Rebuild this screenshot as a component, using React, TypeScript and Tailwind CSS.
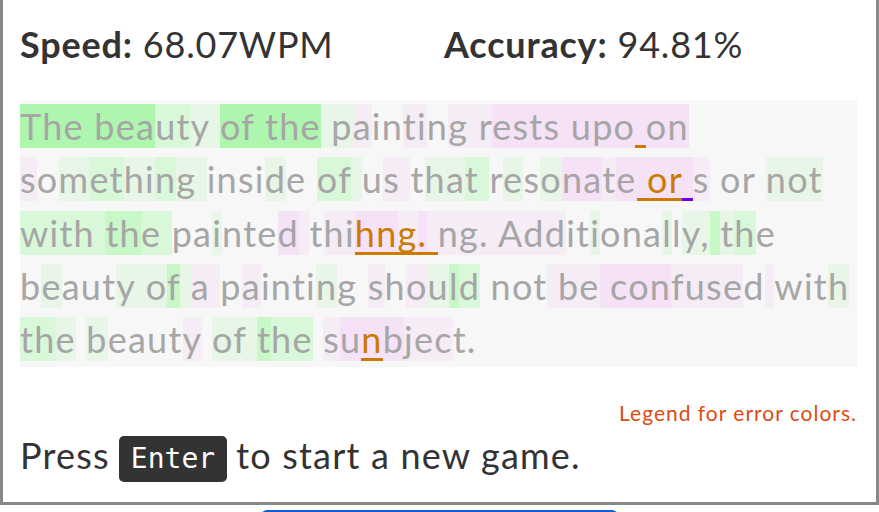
import React from "react";

// heat levels for each typed character
const heat: Record<string, string> = {
  G: "bg-[#aef5ae]",
  M: "bg-[#c8f7c8]",
  g: "bg-[#d9f8d9]",
  l: "bg-[#e7f6e7]",
  P: "bg-[#f6e2f6]",
  p: "bg-[#f5ecf5]",
  ".": "",
};

type Seg = { t: string; c: string; err?: "o" | "p" };

const lines: Seg[][] = [
  [
    { t: "The beauty of the painting rests upo", c: "GGGGGGGggllGGGGGGllp..pp.pppPPPPPPPPP" },
    { t: " ", c: "P", err: "o" },
    { t: "on", c: "PP" },
  ],
  [
    { t: "something inside of us that resonate", c: "p.lggllgll....l..ggl pp.llgg.l.lPPpPP" },
    { t: " or", c: "PPP", err: "o" },
    { t: " ", c: "P", err: "p" },
    { t: "s or not", c: "p....lll" },
  ],
  [
    { t: "with the painted thi", c: "gggggMMgg..l...Pp.pp" },
    { t: "hng. ", c: "PPpPp", err: "o" },
    { t: "ng. Additionally, the", c: "ppppppp..l...l.llMlg" },
  ],
  [
    { t: "beauty of a painting should not be confused with", c: ".l...lllMlpp.p....l..p.plMg....pppPPPPpppp.p...l." },
  ],
  [
    { t: "the beauty of the su", c: "ggl.l....p.lllMgg.pP" },
    { t: "n", c: "P", err: "o" },
    { t: "bject.", c: "Pppp.." },
  ],
];

function Line({ segs }: { segs: Seg[] }) {
  return (
    <div className="whitespace-pre leading-[53.33px]">
      {segs.map((s, i) =>
        s.t.split("").map((ch, j) => {
          const cls = heat[s.c[j] ?? "."] ?? "";
          const e =
            s.err === "o"
              ? "text-[#cc7a00] shadow-[inset_0_-3px_0_#cc7a00]"
              : s.err === "p"
              ? "shadow-[inset_0_-3px_0_#6a00f0]"
              : "";
          return (
            <span key={i + "-" + j} className={`${cls} ${e}`}>
              {ch}
            </span>
          );
        })
      )}
    </div>
  );
}

export default function App() {
  return (
    <div className="h-[512px] w-[879px] overflow-hidden bg-white font-['Lato',sans-serif]">
      <div className="border-x-[3px] border-b-[3px] border-[#888] pl-[17px] pr-[19px] pt-[23px] pb-[20px] text-[#333]">
        {/* stats */}
        <div className="flex text-[36px] leading-[43px] tracking-[0.8px]">
          <div className="w-[424px]">
            <span className="font-bold">Speed:</span> 68.07WPM
          </div>
          <div>
            <span className="font-bold">Accuracy:</span> 94.81%
          </div>
        </div>

        {/* typed text heatmap */}
        <div className="mt-[34px] bg-[#f7f7f7] text-[36px] tracking-[1.25px] text-[#a6a6a6]">
          {lines.map((l, i) => (
            <Line key={i} segs={l} />
          ))}
        </div>

        <div className="mt-[34px] text-right text-[21px] leading-[24px] tracking-[1px] text-[#dd4b12]">
          Legend for error colors.
        </div>

        <div className="mt-[11px] flex h-[46px] items-center gap-[9px] text-[36px] tracking-[1.2px]">
          <span className="pb-[6px] leading-[43px]">Press</span>
          <kbd className="flex h-[46px] items-center rounded-[5px] bg-[#333] px-[12px] font-['DejaVu_Sans_Mono',monospace] text-[28px] tracking-normal text-white">
            Enter
          </kbd>
          <span className="pb-[6px] leading-[43px]">to start a new game.</span>
        </div>
      </div>

      <div className="mt-[5px] flex justify-center">
        <div className="h-[40px] w-[357px] rounded-[6px] bg-[#0b5ed7]" />
      </div>
    </div>
  );
}
